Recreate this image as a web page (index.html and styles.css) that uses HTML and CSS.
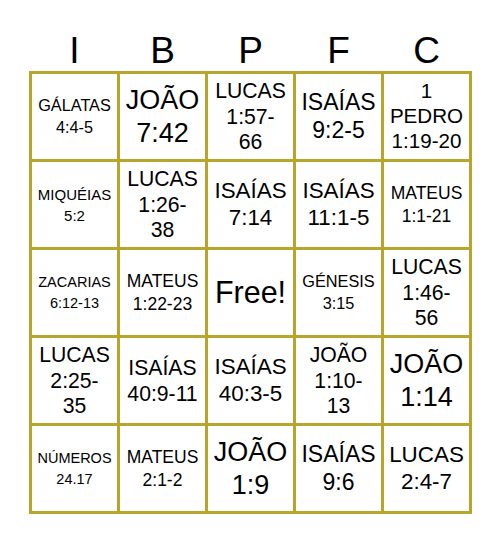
FILE: index.html
```html
<!DOCTYPE html>
<html lang="pt">
<head>
    <meta charset="UTF-8">
    <meta name="viewport" content="width=device-width, initial-scale=1.0">
    <title>Bingo</title>
    <link rel="stylesheet" href="styles.css">
</head>
<body>
    <div class="card">
        <div class="letters">
            <div>I</div>
            <div>B</div>
            <div>P</div>
            <div>F</div>
            <div>C</div>
        </div>

        <div class="grid">
            <div class="cell s16">GÁLATAS<br>4:4-5</div>
            <div class="cell s27">JOÃO<br>7:42</div>
            <div class="cell s21">LUCAS<br>1:57-<br>66</div>
            <div class="cell s23">ISAÍAS<br>9:2-5</div>
            <div class="cell s20">1<br>PEDRO<br>1:19-20</div>

            <div class="cell s15">MIQUÉIAS<br>5:2</div>
            <div class="cell s21">LUCAS<br>1:26-<br>38</div>
            <div class="cell s22">ISAÍAS<br>7:14</div>
            <div class="cell s22">ISAÍAS<br>11:1-5</div>
            <div class="cell s17">MATEUS<br>1:1-21</div>

            <div class="cell s14">ZACARIAS<br>6:12-13</div>
            <div class="cell s17">MATEUS<br>1:22-23</div>
            <div class="cell s30">Free!</div>
            <div class="cell s16">GÉNESIS<br>3:15</div>
            <div class="cell s21">LUCAS<br>1:46-<br>56</div>

            <div class="cell s21">LUCAS<br>2:25-<br>35</div>
            <div class="cell s21">ISAÍAS<br>40:9-11</div>
            <div class="cell s22">ISAÍAS<br>40:3-5</div>
            <div class="cell s21">JOÃO<br>1:10-<br>13</div>
            <div class="cell s27">JOÃO<br>1:14</div>

            <div class="cell s14">NÚMEROS<br>24.17</div>
            <div class="cell s17">MATEUS<br>2:1-2</div>
            <div class="cell s27">JOÃO<br>1:9</div>
            <div class="cell s23">ISAÍAS<br>9:6</div>
            <div class="cell s22">LUCAS<br>2:4-7</div>
        </div>
    </div>
</body>
</html>
```

FILE: styles.css
```css
body { margin: 0; padding-top: 31px; font-family: "Liberation Sans", Arial, sans-serif; color: #000; background: #fff; }
.card { width: 443px; margin: 0 auto; }
.letters { display: grid; grid-template-columns: repeat(5, 85px); column-gap: 3px; padding: 0 3px; font-size: 37px; line-height: 40px; text-align: center; }
.grid { display: grid; grid-template-columns: repeat(5, 85px); grid-template-rows: repeat(5, 85px); gap: 3px; padding: 3px; background: #b8a52b; }
.cell { display: flex; align-items: center; justify-content: center; text-align: center; background: #fff; white-space: nowrap; }

.s14 { font-size: 14.5px; line-height: 1.42; }
.s15 { font-size: 15px; line-height: 1.4; }
.s16 { font-size: 16.3px; line-height: 1.33; }
.s17 { font-size: 17.5px; line-height: 1.29; }
.s20 { font-size: 20.6px; line-height: 1.2; }
.s21 { font-size: 21.2px; line-height: 1.2; }
.s22 { font-size: 22.4px; line-height: 1.19; }
.s23 { font-size: 23px; line-height: 1.18; }
.s27 { font-size: 27px; line-height: 1.21; }
.s30 { font-size: 30.5px; line-height: 1.2; }
```
